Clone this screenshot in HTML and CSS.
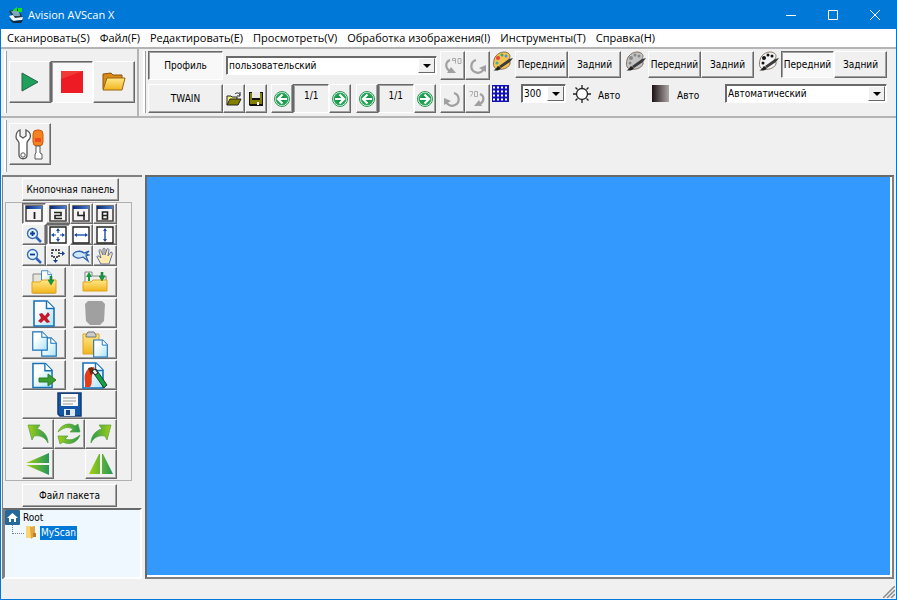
FILE: index.html
```html
<!DOCTYPE html>
<html lang="ru">
<head>
    <meta charset="UTF-8">
    <title>Avision AVScan X</title>
    <link rel="stylesheet" href="styles.css">
</head>
<body>
<svg class="defs" aria-hidden="true">
    <defs>
        <linearGradient id="gold" x1="0" y1="0" x2="0" y2="1"><stop offset="0" stop-color="#ffe88a"/><stop offset="1" stop-color="#f2b51d"/></linearGradient>
        <linearGradient id="lime" x1="0" y1="0" x2="1" y2="0"><stop offset="0" stop-color="#a5d010"/><stop offset="1" stop-color="#23965a"/></linearGradient>
        <linearGradient id="paper" x1="0" y1="0" x2="1" y2="1"><stop offset="0.3" stop-color="#fff"/><stop offset="1" stop-color="#a9e3f7"/></linearGradient>
        <linearGradient id="navy" x1="0" y1="0" x2="1" y2="0"><stop offset="0" stop-color="#0a2a78"/><stop offset="1" stop-color="#4a7fd0"/></linearGradient>
        <radialGradient id="ball"><stop offset="0.4" stop-color="#159447"/><stop offset="1" stop-color="#2fae62"/></radialGradient>
        <symbol id="arrow-ball" viewBox="0 0 16 16">
            <circle cx="8" cy="8" r="7.5" fill="#fff" stroke="#2c9455"/>
            <circle cx="8" cy="8" r="6.500" fill="url(#ball)"/>
            <path d="M13 8H5M8.500 3.500L4 8l4.500 4.500" fill="none" stroke="#fff" stroke-width="2.200"/>
        </symbol>
        <symbol id="doc" viewBox="0 0 22 27">
            <path d="M1 1h13l7 7v18H1z" fill="url(#paper)" stroke="#1673ba" stroke-width="1.6"/>
            <path d="M13.500 1v7.500H21" fill="#fff" stroke="#1673ba" stroke-width="1.400"/>
        </symbol>
        <symbol id="win" viewBox="0 0 18 17">
            <path d="M1 1h16v15H1z" fill="#f5f3f3" stroke="#4a4444" stroke-width="1.600"/>
            <path d="M1 1h16v3H1z" fill="url(#navy)"/>
        </symbol>
        <symbol id="palette" viewBox="0 0 22 20">
            <path d="M2 9C3 3 11-1 16 2c3 2 2 4 1 6s2 3 1 5c-2 5-9 6-13 5-4-1-4-5-3-9z" fill="currentColor" stroke="#6b5b45" stroke-width=".8"/>
            <path d="M1 19c3 0 3-2 5-4l3 2c-2 3-5 3-8 2z" fill="#222"/>
            <path d="M7 15L17 8l4-1-3 4-9 6z" fill="#3c3c3c"/>
        </symbol>
        <symbol id="turn" viewBox="0 0 18 18">
            <path d="M11 3c6 2 6 10 1 12-4 2-7 0-9-3" fill="none" stroke="#a0a0a0" stroke-width="2.200"/>
            <path d="M1 8v7l7-4z" fill="#a0a0a0"/>
        </symbol>
        <symbol id="turn90" viewBox="0 0 18 18">
            <path d="M6 3C1 5 1 11 6 14" fill="none" stroke="#a0a0a0" stroke-width="2.200"/>
            <path d="M3 16h9L7 10z" fill="#a0a0a0"/>
            <path d="M8.500 1.500h3v5M8.500 1.500v2h3M14 1.500h3v5h-3z" fill="none" stroke="#aaa"/>
        </symbol>
        <symbol id="bend" viewBox="0 0 22 20">
            <path d="M1 1l12 0-3 4c6 1 11 7 11 14-3-6-8-8-14-7l-2 4z" fill="url(#lime)" stroke="#4f9f3c" stroke-width=".7"/>
        </symbol>
        <symbol id="down" viewBox="0 0 6 9"><path d="M2 0h2v4h2L3 9 0 4h2z" fill="#159a3c" stroke="#0d7031" stroke-width=".5"/></symbol>
    </defs>
</svg>

<div class="window">
    <header class="titlebar">
        <svg width="16" height="16" viewBox="0 0 16 16"><path d="M1 4l9-2 5 9-9 2z" fill="#273b48"/><path d="M3 4h8l1 5H6z" fill="#7ea9bd"/><path d="M1 9l4-1 2 3 8-1-1 3-9 1z" fill="#f2f7fa"/><path d="M1 12l5 2 9-1-2 3H5z" fill="#122a3b"/><path d="M5 3l4-3v4H5zM10 1h4v4h-4z" fill="#15e61c"/></svg>
        <h1>Avision AVScan X</h1>
        <div class="controls">
            <button aria-label="Свернуть"><svg width="10" height="10"><path d="M0 5.500h10" stroke="#fff"/></svg></button>
            <button aria-label="Развернуть"><svg width="10" height="10"><path d="M.5.5h9v9h-9z" fill="none" stroke="#fff"/></svg></button>
            <button aria-label="Закрыть"><svg width="10" height="10"><path d="M0 0l10 10M10 0L0 10" stroke="#fff"/></svg></button>
        </div>
    </header>

    <nav class="menubar">
        <a href="#">Сканировать(S)</a>
        <a href="#">Файл(F)</a>
        <a href="#">Редактировать(E)</a>
        <a href="#">Просмотреть(V)</a>
        <a href="#">Обработка изображения(I)</a>
        <a href="#">Инструменты(T)</a>
        <a href="#">Справка(H)</a>
    </nav>

    <div class="toolbar">
        <div class="band scan">
            <button class="btn big" aria-label="Старт"><svg width="18" height="22"><path d="M1 2l16 9L1 20z" fill="#1fa15c" stroke="#256345"/></svg></button>
            <button class="btn big pressed" aria-label="Стоп"><svg width="24" height="24"><path d="M1 1h22v22H1z" fill="#ed1c24"/><path d="M1 1h22L1 9z" fill="#f03a38"/></svg></button>
            <button class="btn big" aria-label="Открыть"><svg width="24" height="20" viewBox="0 0 24 20"><path d="M1 17V2l8-1 2 2h9v4" fill="#d98a14" stroke="#8c5410"/><path d="M1 18L5 6h18l-3 12z" fill="url(#gold)" stroke="#9a6410"/></svg></button>
        </div>

        <div class="band profile">
            <div class="row">
                <button class="btn wide pressed">Профиль</button>
                <span class="select grow"><select aria-label="Профиль"><option>пользовательский</option></select></span>
                <span class="pair">
                    <button class="btn small" aria-label="Влево на 90"><svg width="18" height="18"><use href="#turn90"/></svg></button>
                    <button class="btn small" aria-label="Повернуть влево"><svg class="flip" width="18" height="18"><use href="#turn"/></svg></button>
                </span>
            </div>
            <div class="row second">
                <span class="pair">
                    <button class="btn wide">TWAIN</button>
                    <button class="btn file" aria-label="Открыть профиль"><svg width="16" height="14" viewBox="0 0 16 14"><path d="M1 13V4h4l1 1h5v3" fill="#f5f07a" stroke="#222"/><path d="M1 13l3-6h11l-3 6z" fill="#858000" stroke="#222"/><path d="M9 2c2-2 4-1 5 1M14 0v4h-3" fill="none" stroke="#222"/></svg></button>
                    <button class="btn file" aria-label="Сохранить профиль"><svg width="14" height="14"><path d="M0 0h14v14H1L0 13z" fill="#111"/><path d="M1 1h2v7h8V1h2v11H1z" fill="#858000"/><path d="M3 0h8v6H3z" fill="#e8e8e8"/><path d="M8 10h2v3H8z" fill="#fff"/></svg></button>
                </span>
                <span class="pair">
                    <button class="btn file" aria-label="Назад"><svg width="16" height="16"><use href="#arrow-ball"/></svg></button>
                    <output class="counter">1/1</output>
                    <button class="btn file" aria-label="Вперёд"><svg class="flip" width="16" height="16"><use href="#arrow-ball"/></svg></button>
                </span>
                <span class="pair">
                    <button class="btn file" aria-label="Назад"><svg width="16" height="16"><use href="#arrow-ball"/></svg></button>
                    <output class="counter">1/1</output>
                    <button class="btn file" aria-label="Вперёд"><svg class="flip" width="16" height="16"><use href="#arrow-ball"/></svg></button>
                </span>
                <span class="pair">
                    <button class="btn small" aria-label="Повернуть вправо"><svg width="18" height="18"><use href="#turn"/></svg></button>
                    <button class="btn small" aria-label="Вправо на 90"><svg width="18" height="18" viewBox="0 0 18 18"><path d="M12 4c5 2 4 8 0 10" fill="none" stroke="#a0a0a0" stroke-width="2.200"/><path d="M14 16H6l5-6z" fill="#a0a0a0"/><path d="M1.500 1.500h3v2l-2 3M6.500 1.500h3v5h-3z" fill="none" stroke="#aaa"/></svg></button>
                </span>
            </div>
        </div>

        <div class="modes">
            <div class="row">
                <div class="mode">
                    <svg class="color" width="22" height="20"><use href="#palette"/><g fill="#e8413a"><circle cx="6" cy="7" r="2"/><circle cx="14" cy="5" r="1.500" fill="#3b9be0"/><circle cx="10" cy="4" r="1.500" fill="#4aa64a"/><circle cx="5" cy="12" r="1.500" fill="#3bb0a0"/></g></svg>
                    <button class="btn side">Передний</button>
                    <button class="btn side">Задний</button>
                </div>
                <div class="mode">
                    <svg class="gray" width="22" height="20"><use href="#palette"/><g fill="#888"><circle cx="6" cy="7" r="2"/><circle cx="14" cy="5" r="1.500"/><circle cx="10" cy="4" r="1.500"/><circle cx="5" cy="12" r="1.500"/></g></svg>
                    <button class="btn side">Передний</button>
                    <button class="btn side">Задний</button>
                </div>
                <div class="mode">
                    <svg class="mono" width="22" height="20"><use href="#palette"/><g fill="#111"><circle cx="6" cy="7" r="2"/><circle cx="14" cy="5" r="1.500"/><circle cx="10" cy="4" r="1.500"/><circle cx="5" cy="12" r="1.500"/></g></svg>
                    <button class="btn side pressed">Передний</button>
                    <button class="btn side">Задний</button>
                </div>
            </div>
            <div class="row settings">
                <svg width="18" height="18"><path d="M0 0h17v17H0z" fill="#1111b4"/><path d="M0 2.500h17M0 6.500h17M0 10.500h17M0 14.500h17" stroke="#fff" stroke-width="2" stroke-dasharray="2 2" stroke-dashoffset="-1"/></svg>
                <span class="select dpi"><select aria-label="Разрешение"><option>300</option></select></span>
                <svg class="sun" width="18" height="18"><circle cx="9" cy="9" r="5.500" fill="#fff" stroke="#222" stroke-width="1.300"/><path d="M9 0v3M9 15v3M0 9h3M15 9h3M2.500 2.500l2 2M13.500 13.500l2 2M15.500 2.500l-2 2M4.500 13.500l-2 2" stroke="#222" stroke-width="1.300"/></svg>
                <span class="auto">Авто</span>
                <span class="ramp"></span>
                <span class="auto">Авто</span>
                <span class="select grow"><select aria-label="Режим"><option>Автоматический</option></select></span>
            </div>
        </div>
    </div>

    <div class="toolbar tools">
        <div class="band">
            <button class="btn big" aria-label="Настройки"><svg width="30" height="31" viewBox="0 0 30 31"><path d="M5 1v6l3 2 3-2V1c4 2 5 5 4 8-1 2-3 3-3 5v12c0 5-8 5-8 0V14c0-2-3-3-3-6 0-3 1-6 4-7z" fill="#fff" stroke="#555" stroke-width="1.300"/><circle cx="8" cy="26" r="2.200" fill="#fff" stroke="#555"/><rect x="18" y="1" width="10" height="16" rx="4" fill="#f58220" stroke="#c65a10"/><path d="M20 9h6v4h-6z" fill="#ee4b23"/><path d="M21 17h4v7l2 1v5h-7v-5l1-1z" fill="#fff" stroke="#555"/></svg></button>
        </div>
    </div>

    <main class="content">
        <aside class="sidebar">
            <button class="btn head">Кнопочная панель</button>
            <div class="panel">
                <div class="grid view">
                    <button class="btn pressed" aria-label="1 страница"><svg width="18" height="17"><use href="#win"/><path d="M9.500 7v7" stroke="#222" stroke-width="1.800"/></svg></button>
                    <button class="btn" aria-label="2 страницы"><svg width="18" height="17"><use href="#win"/><path d="M5 7.500h7v3H6v3h7" fill="none" stroke="#222" stroke-width="1.600"/></svg></button>
                    <button class="btn" aria-label="4 страницы"><svg width="18" height="17"><use href="#win"/><path d="M6 6.500v4h7M12 6.500V15" fill="none" stroke="#222" stroke-width="1.600"/></svg></button>
                    <button class="btn" aria-label="8 страниц"><svg width="18" height="17"><use href="#win"/><path d="M6.500 7h5v7h-5zM6 10.500h6" fill="none" stroke="#222" stroke-width="1.600"/></svg></button>
                    <button class="btn" aria-label="Увеличить"><svg width="16" height="16"><path d="M10 10l5 5" stroke="#2c62b4" stroke-width="2.500"/><circle cx="6.500" cy="6.500" r="5" fill="#e0f4ff" stroke="#3c6cb8" stroke-width="1.400"/><path d="M4 6.500h5M6.500 4v5" stroke="#123c94" stroke-width="1.800"/></svg></button>
                    <button class="btn pressed" aria-label="По размеру"><svg width="18" height="18"><path d="M1 1h16v16H1z" fill="#fff" stroke="#222" stroke-width="1.400"/><path d="M9 3v4M9 11v4M3 9h4M11 9h4" stroke="#1c4fa8" stroke-width="1.200"/><path d="M7 5h4L9 2zM7 13h4l-2 3zM5 7v4L2 9zM13 7v4l3-2z" fill="#1c4fa8"/></svg></button>
                    <button class="btn" aria-label="По ширине"><svg width="18" height="18"><path d="M1 1h16v16H1z" fill="#fff" stroke="#222" stroke-width="1.400"/><path d="M3 9h12" stroke="#1c4fa8" stroke-width="1.400"/><path d="M5 7v4L2 9zM13 7v4l3-2z" fill="#1c4fa8"/></svg></button>
                    <button class="btn" aria-label="По высоте"><svg width="18" height="18"><path d="M1 1h16v16H1z" fill="#fff" stroke="#222" stroke-width="1.400"/><path d="M9 3v12" stroke="#1c4fa8" stroke-width="1.400"/><path d="M7 5h4L9 2zM7 13h4l-2 3z" fill="#1c4fa8"/></svg></button>
                    <button class="btn" aria-label="Уменьшить"><svg width="16" height="16"><path d="M10 10l5 5" stroke="#2c62b4" stroke-width="2.500"/><circle cx="6.500" cy="6.500" r="5" fill="#e0f4ff" stroke="#3c6cb8" stroke-width="1.400"/><path d="M4 6.500h5" stroke="#123c94" stroke-width="1.800"/></svg></button>
                    <button class="btn" aria-label="Область"><svg width="16" height="16"><path d="M2 2h7v7H2z" fill="none" stroke="#222" stroke-width="1.400" stroke-dasharray="2 1"/><path d="M10 5.500h3M5.500 10v3" stroke="#173f8e"/><path d="M12 3l3 2.500L12 8zM3 12h5l-2.500 3z" fill="#173f8e"/></svg></button>
                    <button class="btn" aria-label="Лупа"><svg width="18" height="14"><path d="M1 6c1-4 8-5 11-2l5-2-3 3 3 1-3 1 2 5-5-4c-4 2-9 1-10-2z" fill="#cfe6fa" stroke="#2c62b4" stroke-width="1.300"/></svg></button>
                    <button class="btn" aria-label="Рука"><svg width="18" height="18"><path d="M5 17L1 10c0-2 2-1 4 1L3 4c0-2 2-2 2 0l2 4V2c0-1 2-1 2 0v6l2-6c1-1 2 0 2 1l-1 6 3-4c2 0 1 2 1 3l-2 6-1 3z" fill="#ffe9ac" stroke="#6674a0"/></svg></button>
                </div>

                <div class="grid docs">
                    <button class="btn" aria-label="Загрузить"><svg width="26" height="24"><path d="M2 23V4h9v8h13v11z" fill="#e7e4dc" stroke="#888"/><svg x="10" y="0" width="11" height="14"><use href="#doc"/></svg><path d="M1 23V12h8l2-2h14v13z" fill="url(#gold)" stroke="#e0a41a"/><svg x="17" y="6" width="6" height="9"><use href="#down"/></svg></svg></button>
                    <button class="btn" aria-label="Заменить"><svg width="26" height="22"><path d="M3 18V1h7v4h14v12" fill="#eee" stroke="#888"/><path d="M1 20V11h8l2-2h14v11z" fill="url(#gold)" stroke="#e0a41a"/><path d="M6 10V6H4l3-5 3 5H8v4z" fill="#159a3c"/><svg x="17" y="1" width="6" height="9"><use href="#down"/></svg></svg></button>
                    <button class="btn" aria-label="Удалить"><svg width="22" height="27"><use href="#doc"/><path d="M6 14l3-1 3 3 3-4 2 3-3 3 3 4-3 1-3-3-3 3-3-2 3-3z" fill="#c3192b"/></svg></button>
                    <button class="btn" aria-label="Корзина"><svg width="20" height="26"><path d="M3 1h14l3 3-1 17-4 4H5l-4-4L0 4z" fill="#a0a0a0"/></svg></button>
                    <button class="btn" aria-label="Копировать"><svg width="25" height="26"><svg x="9" y="6" width="16" height="20"><use href="#doc"/></svg><svg width="16" height="20"><use href="#doc"/></svg></svg></button>
                    <button class="btn" aria-label="Вставить"><svg width="26" height="27"><path d="M1 3h16v20H1z" fill="url(#gold)" stroke="#dba22a"/><path d="M4 4l2-3h6l2 3v2H4z" fill="#ccc" stroke="#777"/><svg x="11" y="8" width="15" height="19"><use href="#doc"/></svg></svg></button>
                    <button class="btn" aria-label="Экспорт"><svg width="24" height="27"><svg width="21" height="27"><use href="#doc"/></svg><path d="M7 16h9v-4l8 6-8 6v-4H7z" fill="#3b9c31" stroke="#2a7a24"/></svg></button>
                    <button class="btn" aria-label="Правка"><svg width="26" height="27"><svg width="22" height="27"><use href="#doc"/></svg><path d="M3 25C4 18 0 14 6 7l6-2 1 4c-6 4-1 12-5 16z" fill="#e53b18"/><path d="M6 6l4-1 3 4-4 4z" fill="#6d2c0e"/><path d="M10 9l4-2 11 16-3 3z" fill="#16a33b" stroke="#123" stroke-width=".8"/><path d="M10 9l3-2 3 4-3 2z" fill="#eee" stroke="#222"/></svg></button>
                </div>

                <button class="btn save" aria-label="Сохранить"><svg width="25" height="25"><path d="M1 1h23v23H3l-2-2z" fill="#1459a8" stroke="#123a70" stroke-width="1.500"/><path d="M4 2h17v12H4z" fill="#fafafa"/><path d="M6 6h13M6 9h13M6 12h10" stroke="#9a9a9a"/><path d="M7 17h11v7H7z" fill="#dce8f2"/><path d="M9 18h4v5H9z" fill="#174985"/></svg></button>

                <div class="grid turns">
                    <button class="btn" aria-label="Влево"><svg width="22" height="20"><use href="#bend"/></svg></button>
                    <button class="btn" aria-label="На 180"><svg width="24" height="22"><path d="M1 9C4 1 13-1 18 3l3-2 2 8-10 0 3-3C10 3 6 5 1 9z" fill="url(#lime)" stroke="#4f9f3c" stroke-width=".7"/><path d="M23 12c-3 9-12 10-17 7l-3 2-2-8h10l-3 3c6 2 10 0 15-4z" fill="url(#lime)" stroke="#4f9f3c" stroke-width=".7"/></svg></button>
                    <button class="btn" aria-label="Вправо"><svg class="flip" width="22" height="20"><use href="#bend"/></svg></button>
                    <button class="btn" aria-label="Отразить по вертикали"><svg width="24" height="22"><path d="M0 10L23 0v10zM0 12h23v10z" fill="url(#lime)"/></svg></button>
                    <span></span>
                    <button class="btn" aria-label="Отразить по горизонтали"><svg width="24" height="20"><path d="M0 20L10 0h1v20zM13 20V0h1l10 20z" fill="url(#lime)"/></svg></button>
                </div>
            </div>

            <button class="btn head batch">Файл пакета</button>
            <ul class="tree">
                <li>
                    <svg width="15" height="15"><rect width="15" height="15" rx="1" fill="#27689a"/><path d="M2 8l5.500-5L13 8h-2v4H9V9H6v3H4V8z" fill="#fff"/></svg>
                    <span>Root</span>
                </li>
                <li class="child">
                    <svg width="12" height="15"><path d="M1 1h5v12H1z" fill="#f7d672"/><path d="M5 2l5-1v10l-4 3z" fill="#e3a63c"/><path d="M8 8h3v4H8z" fill="#b98024"/></svg>
                    <span class="current">MyScan</span>
                </li>
            </ul>
        </aside>
        <section class="canvas"></section>
    </main>

    <footer class="status">
        <svg width="12" height="12"><path d="M0 12L12 0M4 12l8-8M8 12l4-4" stroke="#8a8a8a" stroke-width="1.500"/></svg>
    </footer>
</div>
</body>
</html>
```
FILE: styles.css
```css
*{
    margin: 0;
    padding: 0;
    box-sizing: border-box;
}
body{
    font: 10px/14px "DejaVu Sans Condensed", Tahoma, sans-serif;
    color: #000;
}
button, select{
    font: inherit;
    color: inherit;
}
svg{
    display: block;
    flex: none;
}
.defs{
    position: absolute;
    width: 0;
    height: 0;
}
.flip{
    transform: scaleX(-1);
}
.window{
    display: flex;
    flex-direction: column;
    min-height: 100vh;
    border: 1px solid #0078d7;
    border-top: 0;
    background: #f0f0f0;
}

/* title and menu */
.titlebar{
    display: flex;
    align-items: center;
    height: 29px;
    padding-left: 7px;
    background: #0078d7;
    color: #fff;
}
.titlebar h1{
    flex: 1;
    margin-left: 4px;
    font: 11px/16px "Segoe UI", "Open Sans", sans-serif;
}
.controls{
    display: flex;
}
.controls button{
    display: flex;
    align-items: center;
    justify-content: center;
    width: 42px;
    height: 29px;
    border: 0;
    background: none;
}
.menubar{
    display: flex;
    gap: 10px;
    height: 18px;
    padding-left: 6px;
    background: #fff;
    font: 11px/18px "Segoe UI", "Open Sans", sans-serif;
}
.menubar a{
    color: #000;
    text-decoration: none;
    white-space: nowrap;
}

/* bevelled button */
.btn{
    display: flex;
    flex: none;
    align-items: center;
    justify-content: center;
    border: 1px solid;
    border-color: #fff #696969 #696969 #fff;
    box-shadow: inset -1px -1px 0 #a0a0a0;
    background: #f0f0f0;
    white-space: nowrap;
}
.btn.pressed{
    border-color: #696969 #fff #fff #696969;
    box-shadow: inset 1px 1px 0 #a0a0a0;
    background: #f8f8f8;
}
.big{
    width: 42px;
    height: 42px;
}
.wide{
    width: 75px;
    height: 29px;
}
.small{
    width: 25px;
    height: 29px;
}
.file{
    width: 22px;
    height: 29px;
}
.side{
    width: 53px;
    height: 27px;
}

/* toolbars */
.toolbar{
    display: flex;
    height: 69px;
    padding-left: 3px;
    border-top: 2px solid #b4b4b4;
}
.tools{
    height: 59px;
}
.band{
    position: relative;
    flex: none;
    padding: 2px 0 0 5px;
}
.band::before{
    content: "";
    position: absolute;
    left: 0;
    top: 2px;
    bottom: 3px;
    width: 2px;
    border-right: 1px solid #a0a0a0;
    background: #fff;
}
.scan{
    display: flex;
    align-items: center;
    width: 135px;
    padding: 0 0 2px 5px;
    border-right: 2px solid #b4b4b4;
}
.tools .band{
    padding-top: 5px;
}
.row{
    display: flex;
    align-items: center;
    justify-content: space-between;
}
.profile{
    width: 347px;
    margin-left: 4px;
}
.profile .row{
    gap: 3px;
    margin-bottom: 4px;
}
.pair{
    display: flex;
}
.counter{
    width: 36px;
    height: 29px;
    border: 1px solid;
    border-color: #696969 #fff #fff #696969;
    box-shadow: inset 1px 1px 0 #a0a0a0;
    line-height: 22px;
    text-align: center;
}
.select{
    position: relative;
    display: flex;
    height: 19px;
    border: 1px solid;
    border-color: #696969 #fff #fff #696969;
    box-shadow: inset 1px 1px 0 #696969;
    padding: 1px;
    background: #fff;
}
.select select{
    width: 100%;
    padding-left: 1px;
    border: 0;
    background: none;
    appearance: none;
}
.select::before{
    content: "";
    position: absolute;
    top: 1px;
    right: 1px;
    bottom: 1px;
    width: 15px;
    border: 1px solid;
    border-color: #fff #696969 #696969 #fff;
    background: #f0f0f0;
    pointer-events: none;
}
.select::after{
    content: "";
    position: absolute;
    top: 7px;
    right: 5px;
    border: 4px solid transparent;
    border-top-color: #000;
    border-bottom: 0;
    pointer-events: none;
}
.grow{
    flex: 1;
}
.modes{
    flex: 1;
    max-width: 400px;
    padding: 2px 3px 0 2px;
}
.mode{
    display: flex;
}
.mode svg{
    margin-right: 1px;
}
.color{
    color: #f3c254;
}
.gray{
    color: #c4c4c4;
}
.mono{
    color: #f4f4f4;
}
.settings{
    justify-content: flex-start;
    margin-top: 6px;
}
.dpi{
    width: 45px;
    margin-left: 11px;
}
.sun{
    margin: 0 7px;
}
.auto{
    width: 54px;
    padding-top: 4px;
}
.ramp{
    width: 17px;
    height: 17px;
    margin-right: 8px;
    background: linear-gradient(to right, #1b1113, #b0a8a8);
}
.settings .grow{
    margin-left: -6px;
}

/* work area */
.content{
    display: flex;
    flex: 1;
    gap: 3px;
    padding: 0 2px 0 1px;
}
.sidebar{
    display: flex;
    flex-direction: column;
    width: 140px;
    border-top: 2px solid #808080;
    border-left: 1px solid #808080;
}
.head{
    width: 97px;
    height: 23px;
    margin: 1px 0 1px 19px;
}
.batch{
    width: 95px;
    margin-top: 3px;
}
.panel{
    width: 127px;
    margin-left: 2px;
    padding: 0 14px 1px 16px;
    border: 1px solid #b0b0b0;
}
.grid{
    display: grid;
}
.view{
    grid-template-columns: repeat(4, 1fr);
    grid-auto-rows: 21px;
    margin-bottom: 1px;
}
.docs{
    grid-template-columns: 44px 44px;
    grid-auto-rows: 30px;
    justify-content: space-between;
    gap: 1px 0;
}
.save{
    width: 100%;
    height: 29px;
}
.turns{
    grid-template-columns: repeat(3, 1fr);
    grid-auto-rows: 30px;
}
.tree{
    flex: 1;
    border: 2px solid;
    border-color: #696969 #fff #fff #808080;
    background: #f0f8ff;
    list-style: none;
}
.tree li{
    display: flex;
    align-items: center;
    height: 15px;
    gap: 3px;
}
.tree .child{
    position: relative;
    padding-left: 20px;
}
.child::before{
    content: "";
    position: absolute;
    left: 7px;
    top: 0;
    width: 11px;
    height: 8px;
    border: dotted #808080;
    border-width: 0 0 1px 1px;
}
.tree .current{
    padding: 0 1px;
    background: #0078d7;
    color: #fff;
}
.canvas{
    flex: 1;
    border: 2px solid;
    border-color: #696969 #808080 #808080 #696969;
    box-shadow: inset -2px -2px 0 #fff;
    background: #3399ff;
}
.status{
    display: flex;
    align-items: flex-end;
    justify-content: flex-end;
    height: 20px;
    padding: 1px;
}
```
